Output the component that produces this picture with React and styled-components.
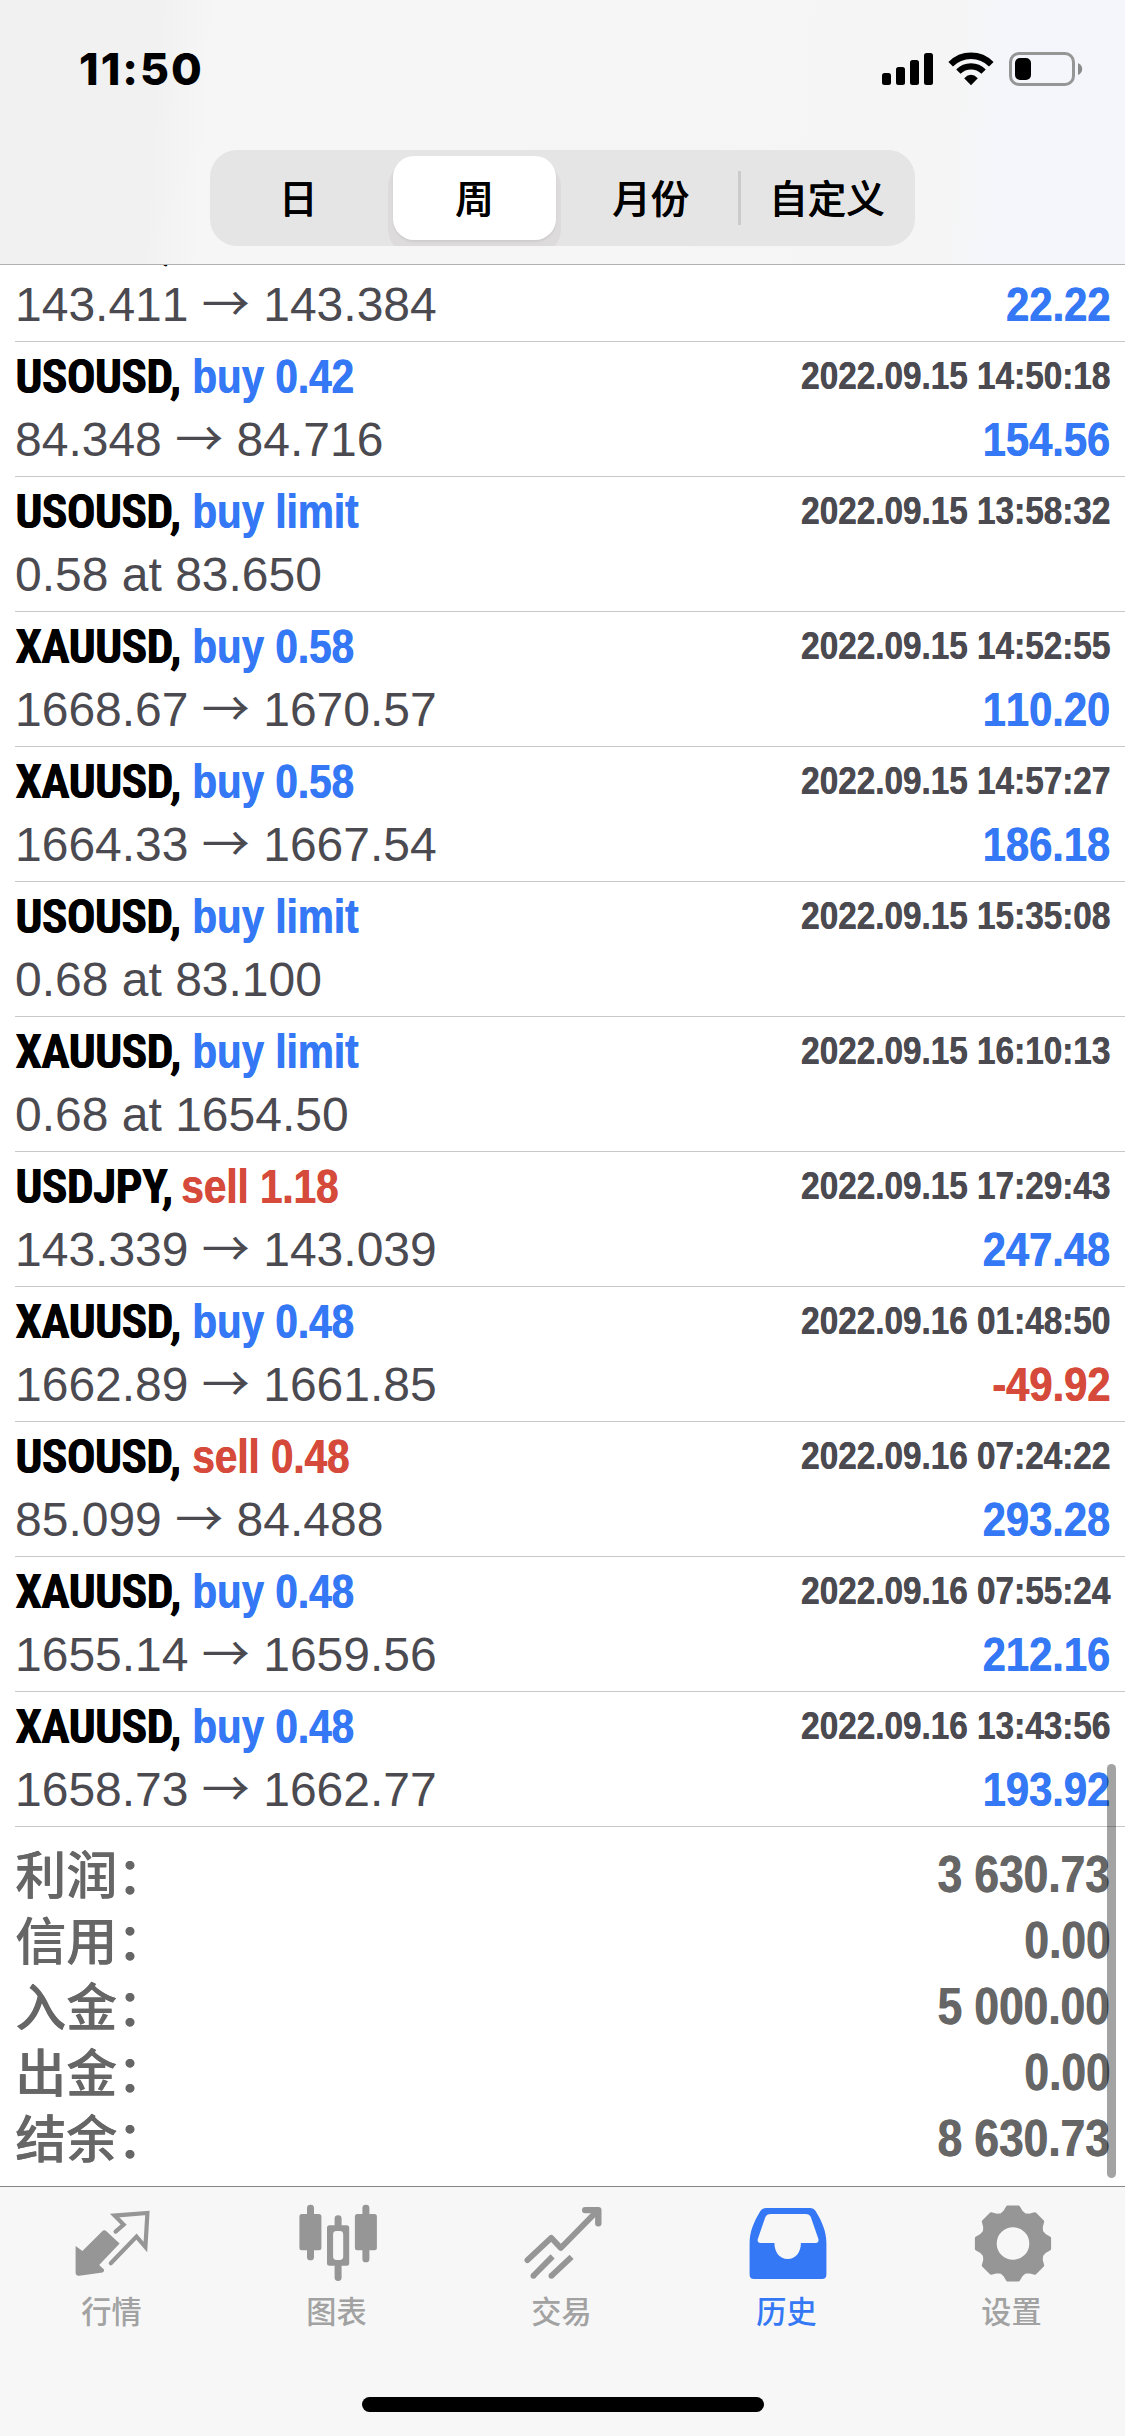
import React from "react";
import styled, { createGlobalStyle } from "styled-components";

const BLUE = "#3478f6";
const RED = "#d54a3a";
const INK = "#4b4a50";
const SANS = `"Liberation Sans", "Noto Sans CJK SC", sans-serif`;
const CJK = `"Noto Sans CJK SC", sans-serif`;

const GlobalStyle = createGlobalStyle`
  body { margin: 0; background: #fff; color: #000; font-family: ${SANS}; }
`;

const Screen = styled.div`
  position: relative;
  display: flex;
  flex-direction: column;
  width: 1125px;
  height: 2436px;
  overflow: hidden;
  background: #fff;
`;

/* ---------- header ---------- */

const Header = styled.header`
  flex: none;
  box-sizing: border-box;
  height: 265px;
  border-bottom: 1px solid #b1b1b3;
  background: linear-gradient(94deg, #f1f1f1 0, #f1f1f1 160px, #f6f6f6 215px, #f5f5f5 960px, #f4f6fb 1010px);
`;

const StatusBar = styled.div`
  display: flex;
  justify-content: space-between;
  align-items: flex-start;
  height: 150px;
  padding: 0 25px 0 79px;
  box-sizing: border-box;
`;

const Clock = styled.time`
  margin-top: 44px;
  font: 800 44.5px/50px Inter, sans-serif;
  letter-spacing: 2px;
`;

const StatusIcons = styled.svg`
  margin-top: 40px;
`;

const Segmented = styled.div`
  display: grid;
  grid-template-columns: repeat(4, 1fr);
  width: 705px;
  height: 96px;
  margin: 0 auto;
  border-radius: 27px;
  overflow: hidden;
  background: #e5e5e5;
`;

const Segment = styled.button`
  box-sizing: border-box;
  display: flex;
  align-items: center;
  justify-content: center;
  margin: ${(p) => (p.$active ? "6px 7px" : "0")};
  padding: 0 0 4px;
  border: 0;
  border-radius: 21px;
  background: ${(p) => (p.$active ? "#fff" : "transparent")};
  box-shadow: ${(p) => (p.$active ? "0 2px 2px #cfcdce, 0 10px 0 5px #dddbdc" : "none")};
  font: 500 38.5px/56px ${CJK};
  text-shadow: 0.4px 0 currentColor;
  color: #000;
`;

const Divided = styled(Segment)`
  position: relative;
  &::before {
    content: "";
    position: absolute;
    left: -1px;
    top: 21px;
    width: 3px;
    height: 54px;
    background: #cbcbcc;
  }
`;

/* ---------- history list ---------- */

const Content = styled.main`
  flex: 1;
  min-height: 0;
  overflow: hidden;
  font-kerning: none;
`;

const Rows = styled.ul`
  list-style: none;
  margin: -58px 0 0;
  padding: 0 0 0 15px;
`;

const Row = styled.li`
  box-sizing: border-box;
  height: 135px;
  padding: 3px 15px 0 0;
  border-bottom: 1px solid #c8c8c9;
`;

const Line = styled.div`
  display: flex;
  justify-content: space-between;
  align-items: flex-start;
  height: 63px;
  white-space: nowrap;
  font-size: 48px;
  line-height: 63px;
`;

const Title = styled.div`
  display: flex;
`;

const SymbolName = styled.span`
  width: ${(p) => p.$width}px;
  font-family: "Roboto Condensed", Roboto, sans-serif;
  font-stretch: 75%;
  font-weight: 700;
  font-kerning: normal;
  letter-spacing: -0.9px;
  text-shadow: 0.4px 0 currentColor;
`;

const Side = styled.span`
  font-weight: 700;
  color: ${(p) => (p.$kind === "sell" ? RED : BLUE)};
  text-shadow: 0.8px 0 currentColor;
  transform: scaleX(0.842);
  transform-origin: left;
`;

const Stamp = styled.span`
  font-size: 39px;
  line-height: 61px;
  font-weight: 700;
  color: ${INK};
  text-shadow: 0.6px 0 currentColor;
  transform: scaleX(0.854);
  transform-origin: right;
`;

const Prices = styled.span`
  color: ${INK};
`;

const Arrow = styled.span`
  font-family: ${CJK};
  font-weight: 400;
  line-height: 0;
`;

const Profit = styled.span`
  font-weight: 700;
  color: ${(p) => (p.$loss ? RED : BLUE)};
  text-shadow: 0.8px 0 currentColor;
  transform: scaleX(0.868);
  transform-origin: right;
`;

/* ---------- totals ---------- */

const Summary = styled.dl`
  margin: 0;
  padding: 15px 15px 0;
`;

const SummaryRow = styled.div`
  display: flex;
  justify-content: space-between;
  align-items: flex-start;
  height: 66px;
  font-size: 51px;
  color: #666;
`;

const Label = styled.dt`
  font-family: ${CJK};
  font-weight: 500;
  line-height: 60px;
  text-shadow: 0.6px 0 currentColor;
`;

const Amount = styled.dd`
  margin: 0;
  font-weight: 700;
  line-height: 66px;
  text-shadow: 0.8px 0 currentColor;
  transform: scaleX(0.868);
  transform-origin: right;
`;

const ScrollThumb = styled.div`
  position: absolute;
  left: 1107px;
  top: 1764px;
  width: 9px;
  height: 414px;
  border-radius: 5px;
  background: rgba(0, 0, 0, 0.36);
`;

/* ---------- tab bar ---------- */

const TabBar = styled.nav`
  flex: none;
  box-sizing: border-box;
  display: flex;
  flex-direction: column;
  justify-content: space-between;
  height: 250px;
  padding-bottom: 24px;
  border-top: 1px solid #868687;
  background: #f7f7f7;
`;

const Tabs = styled.div`
  display: grid;
  grid-template-columns: repeat(5, 1fr);
`;

const Tab = styled.a`
  display: flex;
  flex-direction: column;
  align-items: center;
  padding-top: 13px;
  color: ${(p) => (p.$active ? BLUE : "#969696")};
`;

const TabLabel = styled.span`
  margin: 8px 2px 0 0;
  font: 500 30.2px/36px ${CJK};
  color: ${(p) => (p.$active ? BLUE : "#a2a2a2")};
`;

const HomeIndicator = styled.div`
  align-self: center;
  width: 402px;
  height: 15px;
  border-radius: 8px;
  background: #000;
`;

/* ---------- icons ---------- */

const QuotesIcon = () => (
  <svg width="80" height="84" viewBox="0 0 80 84">
    <path d="M2.6 46 9.4 51 29 31.5Q31.2 29.4 33.4 31.2L46.6 43.6 26.2 65 31 69.6Q31.6 71.8 29.6 72.6L6.4 75.8Q2.6 75.8 2.6 72.4Z" fill="currentColor" />
    <path d="M42.6 31.6 50.6 24.6 41.6 15.6 74.4 13 72.4 47 63.5 36.6 37.8 63.2" fill="none" stroke="currentColor" strokeWidth="4.2" strokeLinecap="round" />
  </svg>
);

const ChartIcon = () => (
  <svg width="80" height="84" viewBox="0 0 80 84" fill="currentColor">
    <rect x="9" y="4.7" width="7" height="55.6" rx="3.4" />
    <rect x="1.4" y="14" width="22" height="36.3" rx="2.5" />
    <rect x="36.6" y="15.3" width="7" height="15" rx="3.4" />
    <rect x="36.6" y="60" width="7" height="21" rx="3.4" />
    <path fillRule="evenodd" d="M31.5 25.3H48.7Q51.2 25.3 51.2 27.8V63.2Q51.2 65.7 48.7 65.7H31.5Q29 65.7 29 63.2V27.8Q29 25.3 31.5 25.3ZM38.5 31Q35.1 31 35.1 34.4V56.6Q35.1 60 38.5 60H41.8Q45.2 60 45.2 56.6V34.4Q45.2 31 41.8 31Z" />
    <rect x="64.4" y="4.7" width="7" height="57.6" rx="3.4" />
    <rect x="56.9" y="14" width="22" height="36.3" rx="2.5" />
  </svg>
);

const TradeIcon = () => (
  <svg width="80" height="84" viewBox="0 0 80 84" fill="none" stroke="currentColor" strokeWidth="5.8">
    <path d="M4.4 60.2 28.2 37.8 37.8 48 74.5 10.6" strokeLinecap="round" strokeLinejoin="round" />
    <path d="M62.2 10.1H75.3V23.2" strokeWidth="6.4" strokeLinecap="round" strokeLinejoin="round" />
    <path d="M66 10H76V21Z" fill="currentColor" stroke="none" />
    <circle cx="10.4" cy="75.8" r="2.9" fill="currentColor" stroke="none" />
    <circle cx="28.4" cy="75.8" r="2.9" fill="currentColor" stroke="none" />
    <path d="M10.4 75.8 29.6 56.4M28.4 75.8 48.6 56.8" />
  </svg>
);

const HistoryIcon = () => (
  <svg width="80" height="84" viewBox="0 0 80 84" fill="currentColor">
    <path fillRule="evenodd" d="M18.6 8H62Q65.6 8 67.6 11C74 21.5 78.4 31.5 78.4 43V74.5Q78.4 79 74 79H6Q1.6 79 1.6 74.5V43C1.6 31.5 6 21.5 12.4 11Q14.6 8 18.6 8ZM22.8 14Q18.8 14.2 17.4 17L9.8 39Q9 43 12.6 43H26.4C26.4 52 31.5 59 39.7 59S52.9 52 52.9 43H67Q71.2 43 70.4 39L62.8 17Q61.4 14.2 57.6 14Z" />
  </svg>
);

const gearPath = (() => {
  const points = [];
  for (let i = 0; i < 8; i += 1) {
    [[-15, 32.6], [-8.5, 37], [8.5, 37], [15, 32.6], [22.5, 31]].forEach(([da, r]) => {
      const a = ((i * 45 + da) * Math.PI) / 180;
      points.push(`${(40 + r * Math.sin(a)).toFixed(2)} ${(43.5 - r * Math.cos(a)).toFixed(2)}`);
    });
  }
  return `M${points.join("L")}Z`;
})();

const SettingsIcon = () => (
  <svg width="80" height="84" viewBox="0 0 80 84">
    <path
      fillRule="evenodd"
      fill="currentColor"
      stroke="currentColor"
      strokeWidth="3"
      strokeLinejoin="round"
      d={`${gearPath}M40 25.7A17.8 17.8 0 1 0 40 61.3A17.8 17.8 0 1 0 40 25.7Z`}
    />
  </svg>
);

const StatusGlyphs = () => (
  <StatusIcons width="230" height="60" viewBox="0 0 230 60">
    <rect x="12" y="33" width="9" height="12" rx="2.5" />
    <rect x="26" y="27" width="9" height="18" rx="2.5" />
    <rect x="40" y="20" width="9" height="25" rx="2.5" />
    <rect x="54" y="13" width="9" height="32" rx="2.5" />
    <g fill="none" stroke="#000">
      <path d="M80.7 24.2A28.5 28.5 0 0 1 121.3 24.2" strokeWidth="6.4" />
      <path d="M88.4 31.6A17.9 17.9 0 0 1 113.6 31.6" strokeWidth="6.2" />
    </g>
    <path d="M94.2 38.2Q101 31.5 107.8 38.2L101 45.2Z" />
    <rect x="140.5" y="13.5" width="63" height="31" rx="8.5" fill="none" stroke="#969696" strokeWidth="3" />
    <path d="M208 23Q212.2 25 212.2 29T208 35Z" fill="#8a8a8a" />
    <rect x="145" y="18" width="16" height="22" rx="5" />
  </StatusIcons>
);

/* ---------- data ---------- */

const SYMBOL_WIDTH = { USOUSD: 176.5, XAUUSD: 177, USDJPY: 165.5 };

const DEALS = [
  ["USDJPY", "sell", "1.18", "2022.09.15 14:31:07", "143.411", "143.384", "22.22"],
  ["USOUSD", "buy", "0.42", "2022.09.15 14:50:18", "84.348", "84.716", "154.56"],
  ["USOUSD", "buy", "limit", "2022.09.15 13:58:32", "0.58 at 83.650"],
  ["XAUUSD", "buy", "0.58", "2022.09.15 14:52:55", "1668.67", "1670.57", "110.20"],
  ["XAUUSD", "buy", "0.58", "2022.09.15 14:57:27", "1664.33", "1667.54", "186.18"],
  ["USOUSD", "buy", "limit", "2022.09.15 15:35:08", "0.68 at 83.100"],
  ["XAUUSD", "buy", "limit", "2022.09.15 16:10:13", "0.68 at 1654.50"],
  ["USDJPY", "sell", "1.18", "2022.09.15 17:29:43", "143.339", "143.039", "247.48"],
  ["XAUUSD", "buy", "0.48", "2022.09.16 01:48:50", "1662.89", "1661.85", "-49.92"],
  ["USOUSD", "sell", "0.48", "2022.09.16 07:24:22", "85.099", "84.488", "293.28"],
  ["XAUUSD", "buy", "0.48", "2022.09.16 07:55:24", "1655.14", "1659.56", "212.16"],
  ["XAUUSD", "buy", "0.48", "2022.09.16 13:43:56", "1658.73", "1662.77", "193.92"],
];

const TOTALS = [
  ["利润：", "3 630.73"],
  ["信用：", "0.00"],
  ["入金：", "5 000.00"],
  ["出金：", "0.00"],
  ["结余：", "8 630.73"],
];

const TABS = [
  ["行情", QuotesIcon],
  ["图表", ChartIcon],
  ["交易", TradeIcon],
  ["历史", HistoryIcon],
  ["设置", SettingsIcon],
];

const Deal = ({ deal: [symbol, kind, volume, stamp, open, close, profit] }) => (
  <Row>
    <Line>
      <Title>
        <SymbolName $width={SYMBOL_WIDTH[symbol]}>{symbol},</SymbolName>
        <Side $kind={kind}>{`${kind} ${volume}`}</Side>
      </Title>
      <Stamp>{stamp}</Stamp>
    </Line>
    <Line>
      <Prices>
        {open}
        {close && <> <Arrow>→</Arrow> {close}</>}
      </Prices>
      {profit && <Profit $loss={profit.startsWith("-")}>{profit}</Profit>}
    </Line>
  </Row>
);

export default function App() {
  return (
    <>
      <GlobalStyle />
      <Screen>
        <Header>
          <StatusBar>
            <Clock>11:50</Clock>
            <StatusGlyphs />
          </StatusBar>
          <Segmented>
            <Segment>日</Segment>
            <Segment $active>周</Segment>
            <Segment>月份</Segment>
            <Divided>自定义</Divided>
          </Segmented>
        </Header>
        <Content>
          <Rows>
            {DEALS.map((deal) => (
              <Deal key={deal[3]} deal={deal} />
            ))}
          </Rows>
          <Summary>
            {TOTALS.map(([label, amount]) => (
              <SummaryRow key={label}>
                <Label>{label}</Label>
                <Amount>{amount}</Amount>
              </SummaryRow>
            ))}
          </Summary>
        </Content>
        <TabBar>
          <Tabs>
            {TABS.map(([label, Icon]) => (
              <Tab key={label} $active={label === "历史"}>
                <Icon />
                <TabLabel $active={label === "历史"}>{label}</TabLabel>
              </Tab>
            ))}
          </Tabs>
          <HomeIndicator />
        </TabBar>
        <ScrollThumb />
      </Screen>
    </>
  );
}
